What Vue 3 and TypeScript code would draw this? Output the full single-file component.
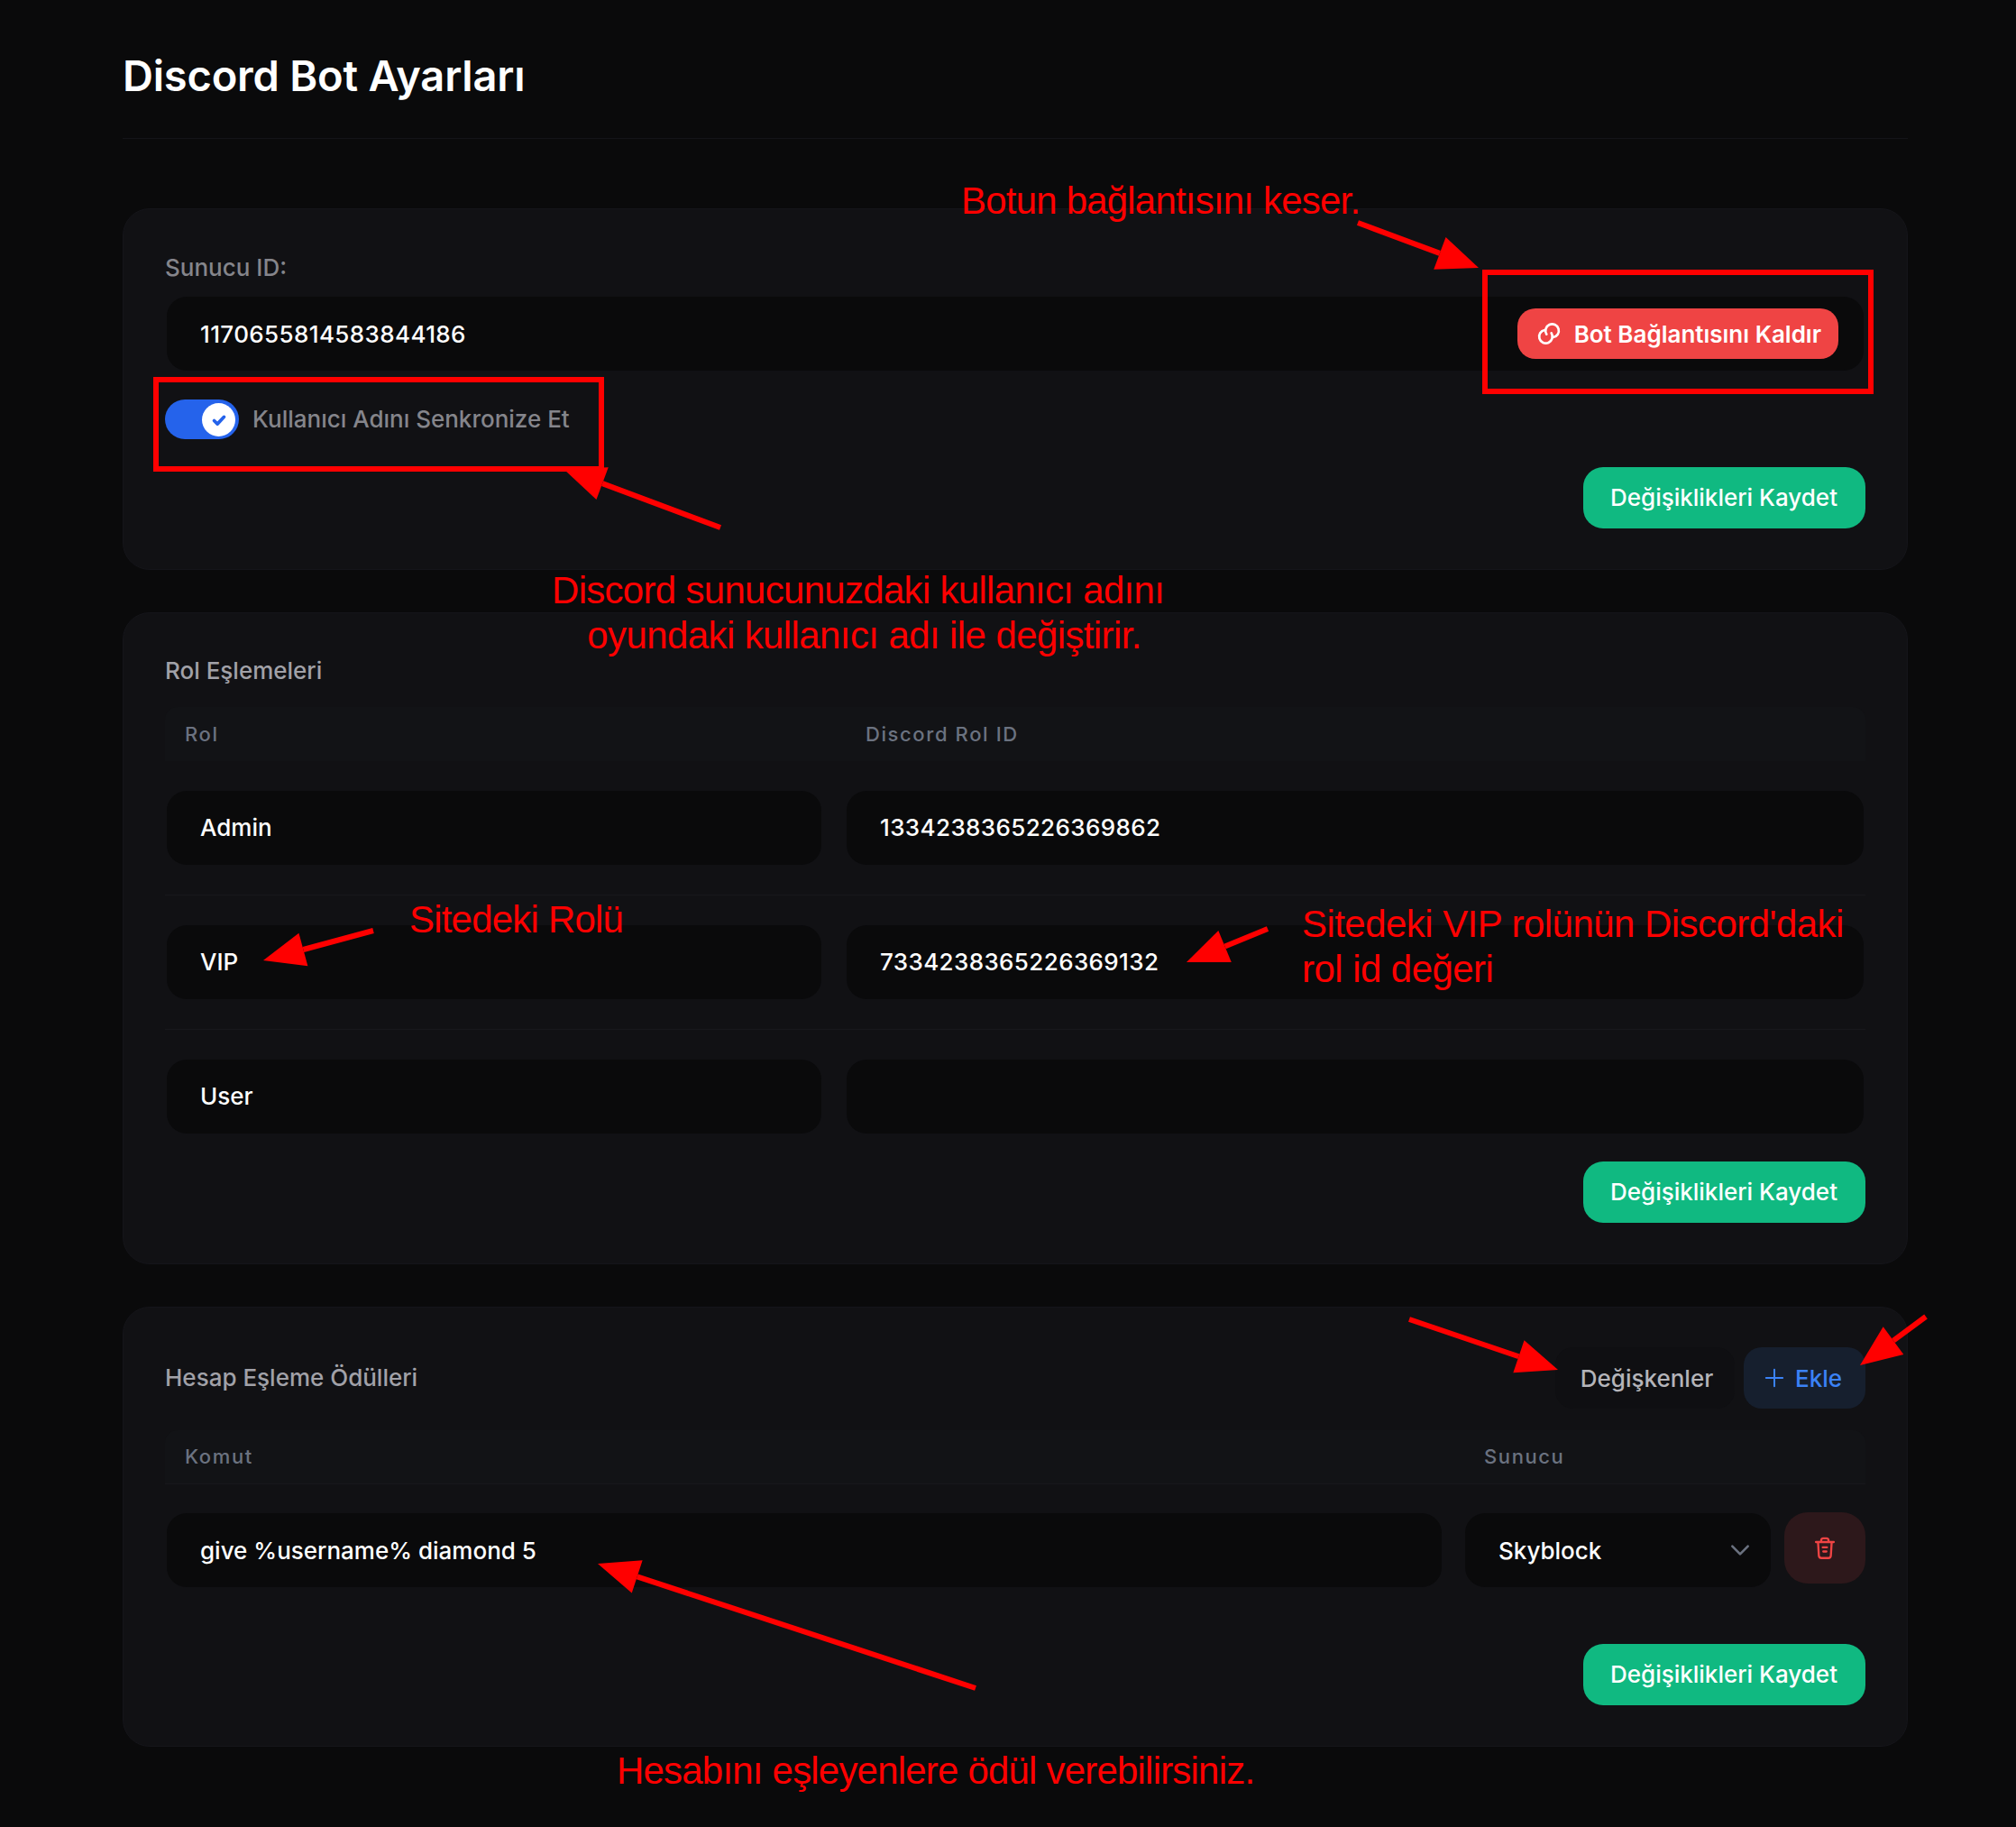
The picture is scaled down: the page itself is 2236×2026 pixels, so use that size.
<template>
  <div class="page">
    <h1 class="title">Discord Bot Ayarları</h1>

    <section class="card first">
      <div class="label-muted">Sunucu ID:</div>
      <div class="field server-field">
        <span class="digits">1170655814583844186</span>
        <button class="btn-danger">
          <svg class="link-icon" viewBox="0 0 24 24" fill="none" stroke="currentColor" stroke-width="2" stroke-linecap="round" stroke-linejoin="round">
            <path d="M10 12.5A5.5 5.5 0 1 1 15.5 15" />
            <path d="M14 11.5A5.5 5.5 0 1 1 8.5 9" />
          </svg>
          Bot Bağlantısını Kaldır
        </button>
      </div>
      <div class="toggle-row">
        <div class="toggle">
          <div class="knob">
            <svg viewBox="0 0 24 24" fill="none" stroke="#2563eb" stroke-width="4" stroke-linecap="round" stroke-linejoin="round">
              <path d="M6 12.5l4 4 8-8.5" />
            </svg>
          </div>
        </div>
        <span class="label-muted">Kullanıcı Adını Senkronize Et</span>
      </div>
      <div class="actions"><button class="btn-save">Değişiklikleri Kaydet</button></div>
    </section>

    <section class="card second">
      <div class="section-title">Rol Eşlemeleri</div>
      <div class="table-head roles-grid">
        <span>Rol</span>
        <span>Discord Rol ID</span>
      </div>
      <div v-for="(role, i) in roles" :key="role.name" class="role-row roles-grid" :class="{ last: i === roles.length - 1 }">
        <div class="field">{{ role.name }}</div>
        <div class="field digits">{{ role.id }}</div>
      </div>
      <div class="actions tight"><button class="btn-save">Değişiklikleri Kaydet</button></div>
    </section>

    <section class="card third">
      <div class="third-head">
        <div class="section-title">Hesap Eşleme Ödülleri</div>
        <div class="head-buttons">
          <button class="btn-vars">Değişkenler</button>
          <button class="btn-add">
            <svg viewBox="0 0 24 24" fill="none" stroke="currentColor" stroke-width="2.2" stroke-linecap="round">
              <path d="M12 2v20M2 12h20" />
            </svg>
            Ekle
          </button>
        </div>
      </div>
      <div class="table-head rewards-head">
        <span>Komut</span>
        <span>Sunucu</span>
      </div>
      <div class="reward-row">
        <div class="field command">give %username% diamond 5</div>
        <div class="field select">
          <span>Skyblock</span>
          <svg class="chevron" viewBox="0 0 24 24" fill="none" stroke="#6b7280" stroke-width="2.4" stroke-linecap="round" stroke-linejoin="round">
            <path d="M4 8l8 8 8-8" />
          </svg>
        </div>
        <button class="btn-trash">
          <svg viewBox="0 0 24 24" fill="none" stroke="#ef4444" stroke-width="2" stroke-linecap="round" stroke-linejoin="round">
            <path d="M3.5 6h17M8.5 6V4.5A2 2 0 0 1 10.5 2.5h3a2 2 0 0 1 2 2V6M5.5 6l.8 13a2.4 2.4 0 0 0 2.4 2.2h6.6a2.4 2.4 0 0 0 2.4-2.2l.8-13M10 11h4M10.5 15h3" />
          </svg>
        </button>
      </div>
      <div class="actions reward-actions"><button class="btn-save">Değişiklikleri Kaydet</button></div>
    </section>

    <svg class="marks" viewBox="0 0 2236 2026">
      <rect x="1647" y="302" width="428" height="132" />
      <rect x="173" y="421" width="494" height="99" />
      <g v-for="(a, i) in arrows" :key="i">
        <line :x1="a.x1" :y1="a.y1" :x2="a.bx" :y2="a.by" />
        <polygon :points="a.head" />
      </g>
    </svg>

    <div class="note note-bot">Botun bağlantısını keser.</div>
    <div class="note note-sync">Discord sunucunuzdaki kullanıcı adını<br /><span class="sync-second">oyundaki kullanıcı adı ile değiştirir.</span></div>
    <div class="note note-role">Sitedeki Rolü</div>
    <div class="note note-vip">Sitedeki VIP rolünün Discord'daki<br />rol id değeri</div>
    <div class="note note-reward">Hesabını eşleyenlere ödül verebilirsiniz.</div>
  </div>
</template>

<script setup lang="ts">
const roles = [
  { name: 'Admin', id: '1334238365226369862' },
  { name: 'VIP', id: '7334238365226369132' },
  { name: 'User', id: '' },
]

// arrow annotations, tail -> tip
const rawArrows = [
  [1506, 247, 1640, 297],
  [799, 585, 625, 520],
  [414, 1032, 292, 1065],
  [1406, 1030, 1316, 1067],
  [1563, 1463, 1728, 1519],
  [2136, 1460, 2063, 1514],
  [1082, 1872, 663, 1734],
]

const arrows = rawArrows.map(([x1, y1, x2, y2]) => {
  const len = Math.hypot(x2 - x1, y2 - y1)
  const ux = (x2 - x1) / len
  const uy = (y2 - y1) / len
  const bx = x2 - ux * 46
  const by = y2 - uy * 46
  const wx = -uy * 19
  const wy = ux * 19
  return {
    x1,
    y1,
    bx,
    by,
    head: `${x2},${y2} ${bx + wx},${by + wy} ${bx - wx},${by - wy}`,
  }
})
</script>

<style>
html,
body {
  background: #0a0a0b;
}
</style>

<style scoped>
.page {
  position: relative;
  box-sizing: border-box;
  width: 2236px;
  height: 2026px;
  padding: 0 120px 0 136px;
  background: #0a0a0b;
  font-family: Inter, 'Noto Sans', sans-serif;
  font-size: 26px;
  font-weight: 500;
  color: #fff;
  overflow: hidden;
}

.title {
  height: 154px;
  margin: 0 0 77px;
  padding-top: 56px;
  box-sizing: border-box;
  border-bottom: 1px solid #141418;
  font-size: 47px;
  line-height: 56px;
  font-weight: 600;
  letter-spacing: -0.2px;
}

.card {
  box-sizing: border-box;
  margin-bottom: 47px;
  padding: 0 46px;
  background: #111114;
  border: 1px solid #15151a;
  border-radius: 30px;
}

.first {
  height: 401px;
  padding-top: 47px;
}

.second {
  height: 723px;
  padding-top: 45px;
}

.third {
  height: 488px;
  padding-top: 44px;
}

.label-muted {
  color: #85858b;
  line-height: 36px;
}

.section-title {
  color: #a1a1a8;
  line-height: 38px;
}

.field {
  box-sizing: border-box;
  height: 82px;
  padding: 0 37px 2px;
  display: flex;
  align-items: center;
  background: #0a0a0b;
  border-radius: 22px;
}

.digits {
  letter-spacing: 0.38px;
}

.server-field {
  margin: 14px 2px 0 2px;
  justify-content: space-between;
  padding: 0 28px 0 37px;
}

.btn-danger,
.btn-save,
.btn-vars,
.btn-add,
.btn-trash {
  border: 0;
  font: inherit;
  cursor: pointer;
}

.btn-danger {
  height: 56px;
  padding: 0 19px;
  display: flex;
  align-items: center;
  gap: 12px;
  background: #ef4444;
  color: #fff;
  font-weight: 600;
  border-radius: 20px;
}

.link-icon {
  width: 32px;
  height: 32px;
}

.toggle-row {
  margin-top: 32px;
  display: flex;
  align-items: center;
  gap: 15px;
}

.toggle {
  box-sizing: border-box;
  width: 82px;
  height: 44px;
  padding: 4px;
  display: flex;
  justify-content: flex-end;
  background: #2563eb;
  border-radius: 22px;
}

.knob {
  width: 37px;
  height: 37px;
  display: flex;
  align-items: center;
  justify-content: center;
  background: #fff;
  border-radius: 50%;
}

.knob svg {
  width: 22px;
  height: 22px;
}

.actions {
  margin-top: 31px;
  display: flex;
  justify-content: flex-end;
}

.btn-save {
  height: 68px;
  padding: 0 31px 2px 30px;
  background: #10b981;
  color: #fff;
  border-radius: 22px;
}

.table-head {
  box-sizing: border-box;
  color: #6b7280;
  font-size: 22px;
  font-weight: 500;
  letter-spacing: 1.6px;
  background: #121316;
  border-radius: 14px 14px 0 0;
}

.roles-grid {
  display: grid;
  grid-template-columns: 726px 1fr;
  gap: 28px;
}

.second .table-head {
  height: 60px;
  margin-top: 21px;
  padding: 0 22px;
  align-items: center;
  grid-template-columns: 733px 1fr;
  gap: 22px;
}

.role-row {
  padding: 33px 2px;
  border-bottom: 1px solid #18181c;
}

.role-row.last {
  border-bottom: 0;
}

.tight {
  margin-top: -2px;
}

.third-head {
  height: 68px;
  display: flex;
  align-items: center;
  justify-content: space-between;
}

.head-buttons {
  display: flex;
  gap: 10px;
}

.btn-vars {
  height: 68px;
  width: 199px;
  padding-left: 10px;
  padding-bottom: 0;
  background: #0f0f12;
  color: #b4b4b9;
  border-radius: 20px;
}

.btn-add {
  height: 68px;
  width: 135px;
  padding: 0;
  display: flex;
  align-items: center;
  justify-content: center;
  gap: 12px;
  background: #161f2e;
  color: #3b82f6;
  border-radius: 20px;
}

.btn-add svg {
  width: 22px;
  height: 22px;
  margin-left: -3px;
}

.rewards-head {
  height: 60px;
  margin-top: 24px;
  padding: 0 22px 2px;
  display: flex;
  align-items: center;
  justify-content: space-between;
  border-bottom: 1px solid #18181c;
}

.rewards-head span:last-child {
  width: 401px;
}

.reward-row {
  margin-top: 32px;
  padding-left: 2px;
  display: flex;
  align-items: flex-start;
}

.reward-row .field {
  padding-bottom: 0;
}

.command {
  width: 1414px;
}

.select {
  width: 339px;
  margin-left: 26px;
  justify-content: space-between;
  padding-right: 21px;
}

.chevron {
  width: 26px;
  height: 26px;
}

.btn-trash {
  width: 90px;
  height: 79px;
  margin: -1px 0 0 15px;
  display: flex;
  align-items: center;
  justify-content: center;
  background: #2d181b;
  border-radius: 26px;
}

.btn-trash svg {
  width: 28px;
  height: 28px;
}

.reward-actions {
  margin-top: 63px;
}

.marks {
  position: absolute;
  inset: 0;
  width: 2236px;
  height: 2026px;
  pointer-events: none;
}

.marks rect {
  fill: none;
  stroke: #ff0000;
  stroke-width: 6;
}

.marks line {
  stroke: #ff0000;
  stroke-width: 6;
}

.marks polygon {
  fill: #ff0000;
}

.note {
  position: absolute;
  color: #ff0000;
  font-family: 'Liberation Sans', Arial, sans-serif;
  font-size: 42px;
  font-weight: 400;
  letter-spacing: -0.8px;
  line-height: 50px;
  white-space: nowrap;
}

.note-bot {
  left: 1066px;
  top: 198px;
}

.note-sync {
  left: 612px;
  top: 630px;
  text-align: center;
  letter-spacing: -0.7px;
}

.sync-second {
  position: relative;
  left: 7px;
  letter-spacing: -0.6px;
}

.note-role {
  left: 454px;
  top: 995px;
}

.note-vip {
  left: 1444px;
  top: 1000px;
  letter-spacing: -0.55px;
}

.note-reward {
  left: 684px;
  top: 1939px;
}
</style>
